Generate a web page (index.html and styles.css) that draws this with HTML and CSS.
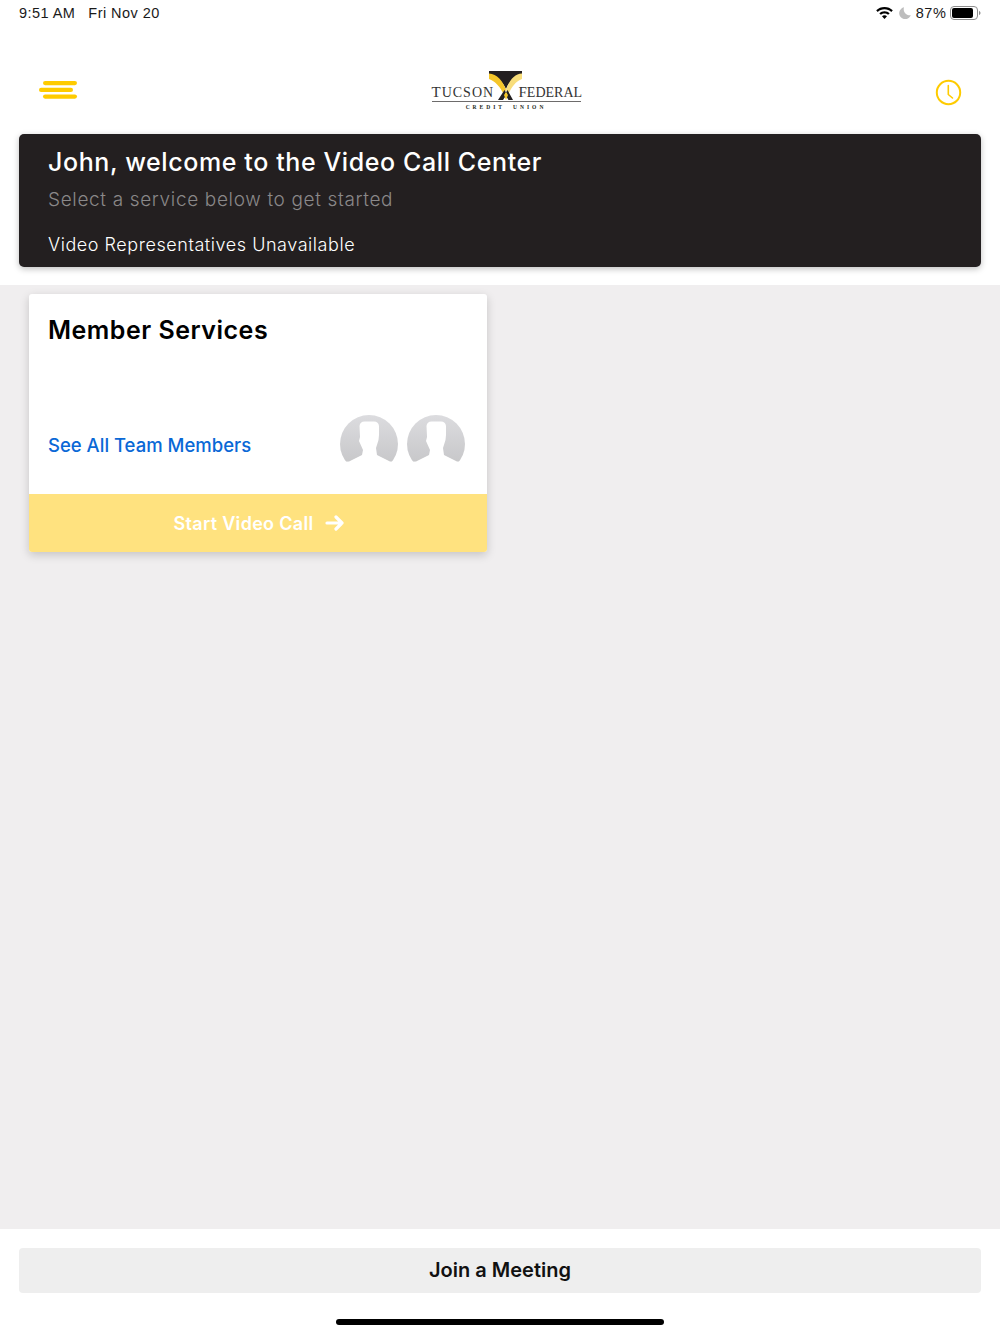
FILE: index.html
```html
<!DOCTYPE html>
<html lang="en">
<head>
<meta charset="utf-8">
<title>Video Call Center</title>
<link rel="stylesheet" href="styles.css">
</head>
<body>
<div class="page">
  <div class="status">
    <div class="status-time"><span>9:51 AM</span><span>Fri Nov 20</span></div>
    <div class="status-right">
      <svg class="wifi" width="17" height="12" viewBox="0 0 17 12"><path d="M8.5 0C5.3 0 2.4 1.2.2 3.3l1.5 1.6C3.5 3.200 5.900 2.200 8.500 2.200s5 1 6.800 2.700l1.500-1.600C14.600 1.200 11.700 0 8.500 0zM8.500 4.200c-2 0-3.800.800-5.200 2l1.600 1.600c1-.800 2.200-1.300 3.600-1.300s2.600.500 3.600 1.300l1.600-1.600c-1.400-1.200-3.200-2-5.200-2zM8.500 8.300c-1 0-1.800.300-2.500 .900L8.500 12 11 9.200c-.700-.600-1.500-.900-2.500-.900z" fill="#000"/></svg>
      <svg class="moon" width="12" height="12" viewBox="0 0 12 12"><path d="M5 .3A6 6 0 1 0 11.800 8.300 6.200 6.200 0 0 1 5 .3z" fill="#bdbdbd"/></svg>
      <span class="battery-pct">87%</span>
      <svg class="battery" width="31" height="14" viewBox="0 0 31 14"><rect x=".5" y=".5" width="27" height="13" rx="3.500" fill="none" stroke="#8e8e8e"/><rect x="2" y="2" width="21" height="10" rx="2" fill="#000"/><path d="M29 5v4c.900-.300 1.500-1 1.500-2s-.600-1.700-1.500-2z" fill="#8e8e8e"/></svg>
    </div>
  </div>

  <header class="topbar">
    <svg class="menu-icon" width="39" height="18" viewBox="0 0 39 18"><g fill="#fecb00"><rect x="4" y="0" width="34" height="4.200" rx="2.100"/><rect x="0" y="6.800" width="34" height="4.200" rx="2.100"/><rect x="4" y="13.500" width="34" height="4.200" rx="2.100"/></g></svg>
    <div class="logo">
      <div class="logo-row">
        <span class="logo-word logo-word-left">TUCSON</span>
        <svg class="logo-mark" width="33" height="29" viewBox="0 0 33 29">
          <path d="M0 0H33V4C25 5 20 11 17 18C14 11 8 5 0 4Z" fill="#231f20"/>
          <path d="M0 2.500C8 3 14 10 17 19L14.500 23C11.500 16 6 10 0 8Z" fill="#f5c62a"/>
          <path d="M33 2.500C25 3 20 10 17 19L19.500 23C22.500 16 27 10 33 8Z" fill="#f8dd7a"/>
          <path d="M9 29L15.500 19L18 23L14 29ZM24 29L18.500 19L16 23L19.500 29Z" fill="#231f20"/>
          <path d="M15 24L17 21L19 24L17 29Z" fill="#f5c62a"/>
        </svg>
        <span class="logo-word logo-word-right">FEDERAL</span>
      </div>
      <div class="logo-rule"></div>
      <div class="logo-sub"><span>CREDIT</span><span>UNION</span></div>
    </div>
    <svg class="clock-icon" width="27" height="27" viewBox="0 0 27 27"><circle cx="13.500" cy="13.500" r="11.700" fill="none" stroke="#fecb00" stroke-width="2"/><path d="M13.300 6.500V15.500L17.500 19" fill="none" stroke="#fecb00" stroke-width="1.600" stroke-linecap="round" stroke-linejoin="round"/></svg>
  </header>

  <section class="banner">
    <h1 class="banner-title">John, welcome to the Video Call Center</h1>
    <p class="banner-sub">Select a service below to get started</p>
    <p class="banner-status">Video Representatives Unavailable</p>
  </section>

  <main class="content">
    <article class="card">
      <div class="card-body">
        <h2 class="card-title">Member Services</h2>
        <div class="card-row">
          <a class="team-link">See All Team Members</a>
          <div class="avatars">
            <svg class="avatar" width="58" height="58" viewBox="0 0 58 58"><defs><linearGradient id="av1" x1="0" y1="0" x2="0" y2="1"><stop offset="0" stop-color="#dcdcdf"/><stop offset="1" stop-color="#c3c3c5"/></linearGradient></defs><circle cx="29" cy="29" r="29" fill="url(#av1)"/><path d="M19.500 11Q20 6.500 24.500 6.500H34Q38.500 6.500 39 11V20L38.500 25L36 33L37 40L50 46.500L58 47V58H0V47L9 46.500L22 40L23 35L19 26L20 22Z" fill="#fff"/></svg>
            <svg class="avatar" width="58" height="58" viewBox="0 0 58 58"><defs><linearGradient id="av2" x1="0" y1="0" x2="0" y2="1"><stop offset="0" stop-color="#dcdcdf"/><stop offset="1" stop-color="#c3c3c5"/></linearGradient></defs><circle cx="29" cy="29" r="29" fill="url(#av2)"/><path d="M19.500 11Q20 6.500 24.500 6.500H34Q38.500 6.500 39 11V20L38.500 25L36 33L37 40L50 46.500L58 47V58H0V47L9 46.500L22 40L23 35L19 26L20 22Z" fill="#fff"/></svg>
          </div>
        </div>
      </div>
      <button class="start-btn" type="button">
        <span>Start Video Call</span>
        <svg width="20" height="18" viewBox="0 0 20 18"><path d="M3 9H18M12 3L18 9L12 15" fill="none" stroke="#fff" stroke-width="3.200" stroke-linecap="round" stroke-linejoin="round"/></svg>
      </button>
    </article>
  </main>

  <footer class="footer">
    <button class="join-btn" type="button">Join a Meeting</button>
    <div class="home-bar"></div>
  </footer>
</div>
</body>
</html>
```
FILE: styles.css
```css
* { box-sizing: border-box; }
html, body { margin: 0; padding: 0; background: #fff; }
body { font-family: Inter, "Liberation Sans", sans-serif; }
h1, h2, p { margin: 0; }
.page { width: 1000px; height: 1334px; display: flex; flex-direction: column; overflow: hidden; }

.status { height: 27px; flex: none; display: flex; justify-content: space-between; align-items: center; padding: 0 19px 1px 19px; font-family: "Liberation Sans", sans-serif; font-size: 14.500px; color: #1a1a1a; }
.status-time { display: flex; gap: 13px; letter-spacing: .45px; }
.status-right { display: flex; align-items: center; }
.wifi { margin-right: 6px; }
.moon { margin-right: 5px; }
.battery-pct { margin-right: 3.500px; letter-spacing: .6px; }

.topbar { height: 107px; flex: none; display: grid; grid-template-columns: 1fr auto 1fr; align-items: start; padding: 0 38px 0 39px; }
.menu-icon { margin-top: 54px; }
.clock-icon { justify-self: end; margin-top: 52px; }
.logo { display: flex; flex-direction: column; width: 149px; margin-top: 44px; margin-left: 11px; }
.logo-row { display: flex; align-items: flex-end; justify-content: space-between; height: 29px; font-family: "Liberation Serif", serif; font-size: 14px; color: #333; line-height: 14px; }
.logo-word { display: inline-block; flex: none; }
.logo-word::first-letter { font-size: 15px; }
.logo-word-left { width: 63px; letter-spacing: 1px; }
.logo-word-right { width: 62px; letter-spacing: 0; }
.logo-mark { flex: none; margin: 0 -4px 0 -6px; }
.logo-rule { height: 1px; background: #6d6b6b; margin-top: 1px; }
.logo-sub { display: flex; justify-content: center; gap: 8px; font-family: "Liberation Serif", serif; font-weight: 700; font-size: 5.500px; letter-spacing: 3px; color: #231f20; margin-top: 2px; line-height: 7px; }

.banner { flex: none; height: 133px; margin: 0 19px; background: #231f20; border-radius: 5px; box-shadow: 0 2px 6px rgba(0,0,0,.25); padding: 12px 29px 0; color: #fff; }
.banner-title { font-size: 25px; font-weight: 500; line-height: 32px; letter-spacing: .6px; }
.banner-sub { font-size: 19px; font-weight: 300; line-height: 26px; margin-top: 9px; color: #8a8889; letter-spacing: .65px; }
.banner-status { font-size: 18px; font-weight: 300; line-height: 24px; margin-top: 20px; letter-spacing: .55px; }

.content { flex: none; height: 944px; margin-top: 18px; background: #f0eeef; padding: 9px 29px; }
.card { width: 458px; height: 258px; background: #fff; border-radius: 3px; box-shadow: 0 3px 10px rgba(0,0,0,.18); display: flex; flex-direction: column; overflow: hidden; }
.card-body { flex: 1; padding: 19px 22px 0 19px; display: flex; flex-direction: column; }
.card-title { font-size: 25px; font-weight: 600; line-height: 34px; color: #000; letter-spacing: .5px; }
.card-row { display: flex; justify-content: space-between; align-items: flex-start; margin-top: 68px; }
.team-link { font-size: 18.500px; font-weight: 500; color: #0a68d6; margin-top: 18px; line-height: 24px; }
.avatars { display: flex; gap: 9px; }
.avatar { display: block; }
.start-btn { height: 58px; flex: none; border: 0; background: #ffe27f; color: #fff; font-family: inherit; font-size: 18px; font-weight: 600; letter-spacing: .3px; display: flex; align-items: center; justify-content: center; gap: 11px; padding: 0 0 0 2px; }

.footer { flex: 1; background: #fff; padding: 19px 19px 0; display: flex; flex-direction: column; align-items: center; }
.join-btn { width: 100%; height: 45px; flex: none; border: 0; border-radius: 4px; background: #eeeeee; color: #111; font-family: inherit; font-size: 20px; font-weight: 600; padding: 0 0 2px; }
.home-bar { width: 328px; height: 6px; border-radius: 3px; background: #000; margin-top: 26px; flex: none; }
```
